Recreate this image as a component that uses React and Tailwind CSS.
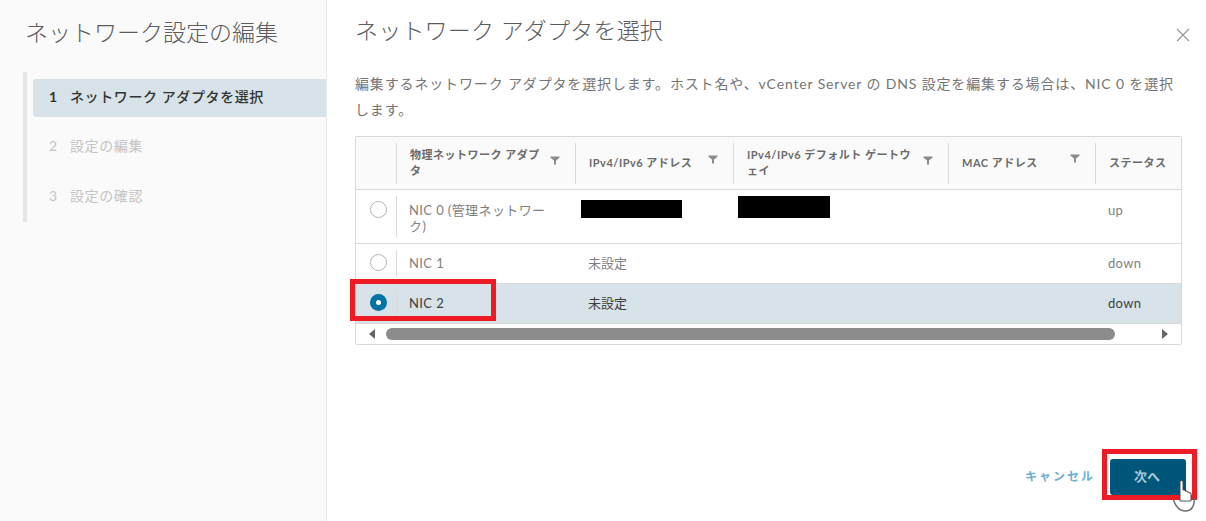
const cols = "grid grid-cols-[40px_179px_158px_215px_147px_1fr]";

function FilterIcon() {
  return (
    <svg width="10" height="9" viewBox="0 0 10 9" className="shrink-0 fill-[#8c8c8c]">
      <path d="M0.5 0.500h9v1.200L6 4.600V8.500H4V4.600L0.500 1.700z" />
    </svg>
  );
}

function HeaderCell({ children, filter = true, iconClass = "" }) {
  return (
    <div className="flex items-center h-full">
      <div className={`flex items-center justify-between w-full h-[41px] pl-[13px] border-l border-[#d9d9d9] ${filter ? "pr-[15px]" : ""}`}>
        <div className={`text-[11px] leading-[16px] font-bold text-[#6b6b6b] tracking-[0.5px] ${filter ? "pr-[5px]" : ""}`}>{children}</div>
        {filter && <div className={iconClass}><FilterIcon /></div>}
      </div>
    </div>
  );
}

function Radio({ checked }) {
  if (checked) {
    return (
      <div className="w-[17px] h-[17px] rounded-full bg-[#0072a3] flex items-center justify-center">
        <div className="w-[5px] h-[5px] rounded-full bg-white"></div>
      </div>
    );
  }
  return <div className="w-[17px] h-[17px] rounded-full border border-[#b3b3b3] bg-white"></div>;
}

function Row({ checked, name, addr, gateway, status, tall }) {
  const text = checked ? "text-[#3d3d3d]" : "text-[#7f7f7f]";
  return (
    <div className={`${cols} ${tall ? "h-[54px]" : "h-[40px]"} ${checked ? "bg-[#d8e3e9]" : "bg-white"} border-b border-[#d9d9d9] text-[13px] leading-[16px] ${text}`}>
      <div className={`flex justify-center pl-[4px] ${tall ? "pt-[11px]" : "pt-[10px]"}`}>
        <Radio checked={checked} />
      </div>
      <div className={`border-l border-[#d9d9d9] pl-[12px] pr-[20px] my-[6px] tracking-[0.4px] ${tall ? "pt-[6px]" : "pt-[5px]"}`}>{name}</div>
      <div className={`pl-[13px] ${tall ? "pt-[12px]" : "pt-[11px]"}`}>{addr}</div>
      <div className="pl-[5px] pt-[6px]">{gateway}</div>
      <div></div>
      <div className={`pl-[13px] tracking-[0.3px] ${tall ? "pt-[12px]" : "pt-[11px]"}`}>{status}</div>
    </div>
  );
}

export default function App() {
  return (
    <div className="relative w-[1206px] h-[521px] overflow-hidden bg-white flex font-['Lato','Noto_Sans_CJK_JP',sans-serif]">
      {/* Side nav */}
      <div className="w-[327px] h-full shrink-0 bg-[#fafafa] border-r border-[#e8e8e8] pt-[16px]">
        <h2 className="pl-[25px] text-[23px] leading-[32px] font-light text-[#5c5c5c]">ネットワーク設定の編集</h2>
        <div className="mt-[24px] ml-[23px] border-l-[4px] border-[#e6e6e6] h-[150px] pt-[7px] pl-[6px]">
          <div className="flex items-center h-[38px] pb-[3px] rounded-l-[3px] bg-[#d8e3e9] pl-[16px] text-[14px] tracking-[0.6px] font-medium text-[#333]">
            <span className="w-[21px] font-bold">1</span>ネットワーク アダプタを選択
          </div>
          <div className="flex items-center h-[38px] pb-[3px] mt-[11px] pl-[16px] text-[14px] tracking-[0.6px] text-[#c4c4c4]">
            <span className="w-[21px]">2</span>設定の編集
          </div>
          <div className="flex items-center h-[38px] pb-[3px] mt-[12px] pl-[16px] text-[14px] tracking-[0.6px] text-[#c4c4c4]">
            <span className="w-[21px]">3</span>設定の確認
          </div>
        </div>
      </div>

      {/* Main */}
      <div className="flex-1 flex flex-col pl-[28px] pr-[24px] pt-[15px]">
        <div className="flex items-start justify-between">
          <h3 className="text-[23px] tracking-[0.2px] leading-[30px] font-light text-[#5c5c5c]">ネットワーク アダプタを選択</h3>
          <svg width="14" height="14" viewBox="0 0 14 14" className="mt-[13px] mr-[-8px] stroke-[#9a9a9a]" fill="none" strokeWidth="1.3">
            <path d="M1 1l12 12M13 1L1 13" />
          </svg>
        </div>
        <p className="mt-[26px] text-[14px] tracking-[0.85px] leading-[26px] text-[#757575] w-[825px]">
          編集するネットワーク アダプタを選択します。ホスト名や、vCenter Server の DNS 設定を編集する場合は、NIC 0 を選択します。
        </p>

        {/* Table */}
        <div className="mt-[13px] w-[827px] border border-[#d9d9d9] rounded-[2px] overflow-hidden">
          <div className={`${cols} h-[53px] bg-[#fafafa] border-b border-[#d9d9d9]`}>
            <div></div>
            <HeaderCell iconClass="-mt-[6px]">物理ネットワーク アダプタ</HeaderCell>
            <HeaderCell iconClass="-mt-[8px]">IPv4/IPv6 アドレス</HeaderCell>
            <HeaderCell iconClass="-mt-[6px]">IPv4/IPv6 デフォルト ゲートウェイ</HeaderCell>
            <HeaderCell iconClass="-mt-[10px]">MAC アドレス</HeaderCell>
            <HeaderCell filter={false}>ステータス</HeaderCell>
          </div>
          <Row
            tall
            name="NIC 0 (管理ネットワーク)"
            addr={<div className="w-[101px] h-[18px] bg-black -ml-[7px] -mt-[2px]"></div>}
            gateway={<div className="w-[92px] h-[22px] bg-black"></div>}
            status="up"
          />
          <Row name="NIC 1" addr="未設定" status="down" />
          <Row checked name="NIC 2" addr="未設定" status="down" />
          {/* Scrollbar */}
          <div className="flex items-center h-[20px] bg-white px-[13px]">
            <div className="w-0 h-0 border-y-[5px] border-y-transparent border-r-[6px] border-r-[#666]"></div>
            <div className="ml-[11px] w-[729px] h-[12px] rounded-full bg-[#8c8c8c]"></div>
            <div className="ml-auto w-0 h-0 border-y-[5px] border-y-transparent border-l-[6px] border-l-[#666]"></div>
          </div>
        </div>

        {/* Footer */}
        <div className="mt-auto mb-[26px] flex items-center justify-end gap-[15px]">
          <span className="text-[12px] font-bold tracking-[2px] text-[#6fb0d0]">キャンセル</span>
          <div className="w-[76px] h-[36px] mr-[-4px] rounded-[3px] bg-[#00567a] flex items-center justify-center text-[13px] font-bold text-[#a9cbd9] pr-[2px]">次へ</div>
        </div>
      </div>

      {/* Annotation boxes */}
      <div className="absolute left-[350px] top-[279px] w-[146px] h-[42px] border-[5px] border-[#ed1c24]"></div>
      <div className="absolute left-[1102px] top-[449px] w-[95px] h-[51px] border-[5px] border-[#ed1c24]"></div>

      {/* Cursor */}
      <svg className="absolute left-[1172px] top-[478px]" width="28" height="36" viewBox="0 0 28 36" fill="none">
        <path d="M1.500 22c2 6 6 11 12 11s9-5 9-13" stroke="#6f6f6f" strokeWidth="1.500" />
        <path d="M8 4a1.500 1.500 0 0 1 3 0v8h2v1h2v1h2v1h2v8H8z" fill="#fff" stroke="#444" strokeWidth="0.9" />
      </svg>
    </div>
  );
}
